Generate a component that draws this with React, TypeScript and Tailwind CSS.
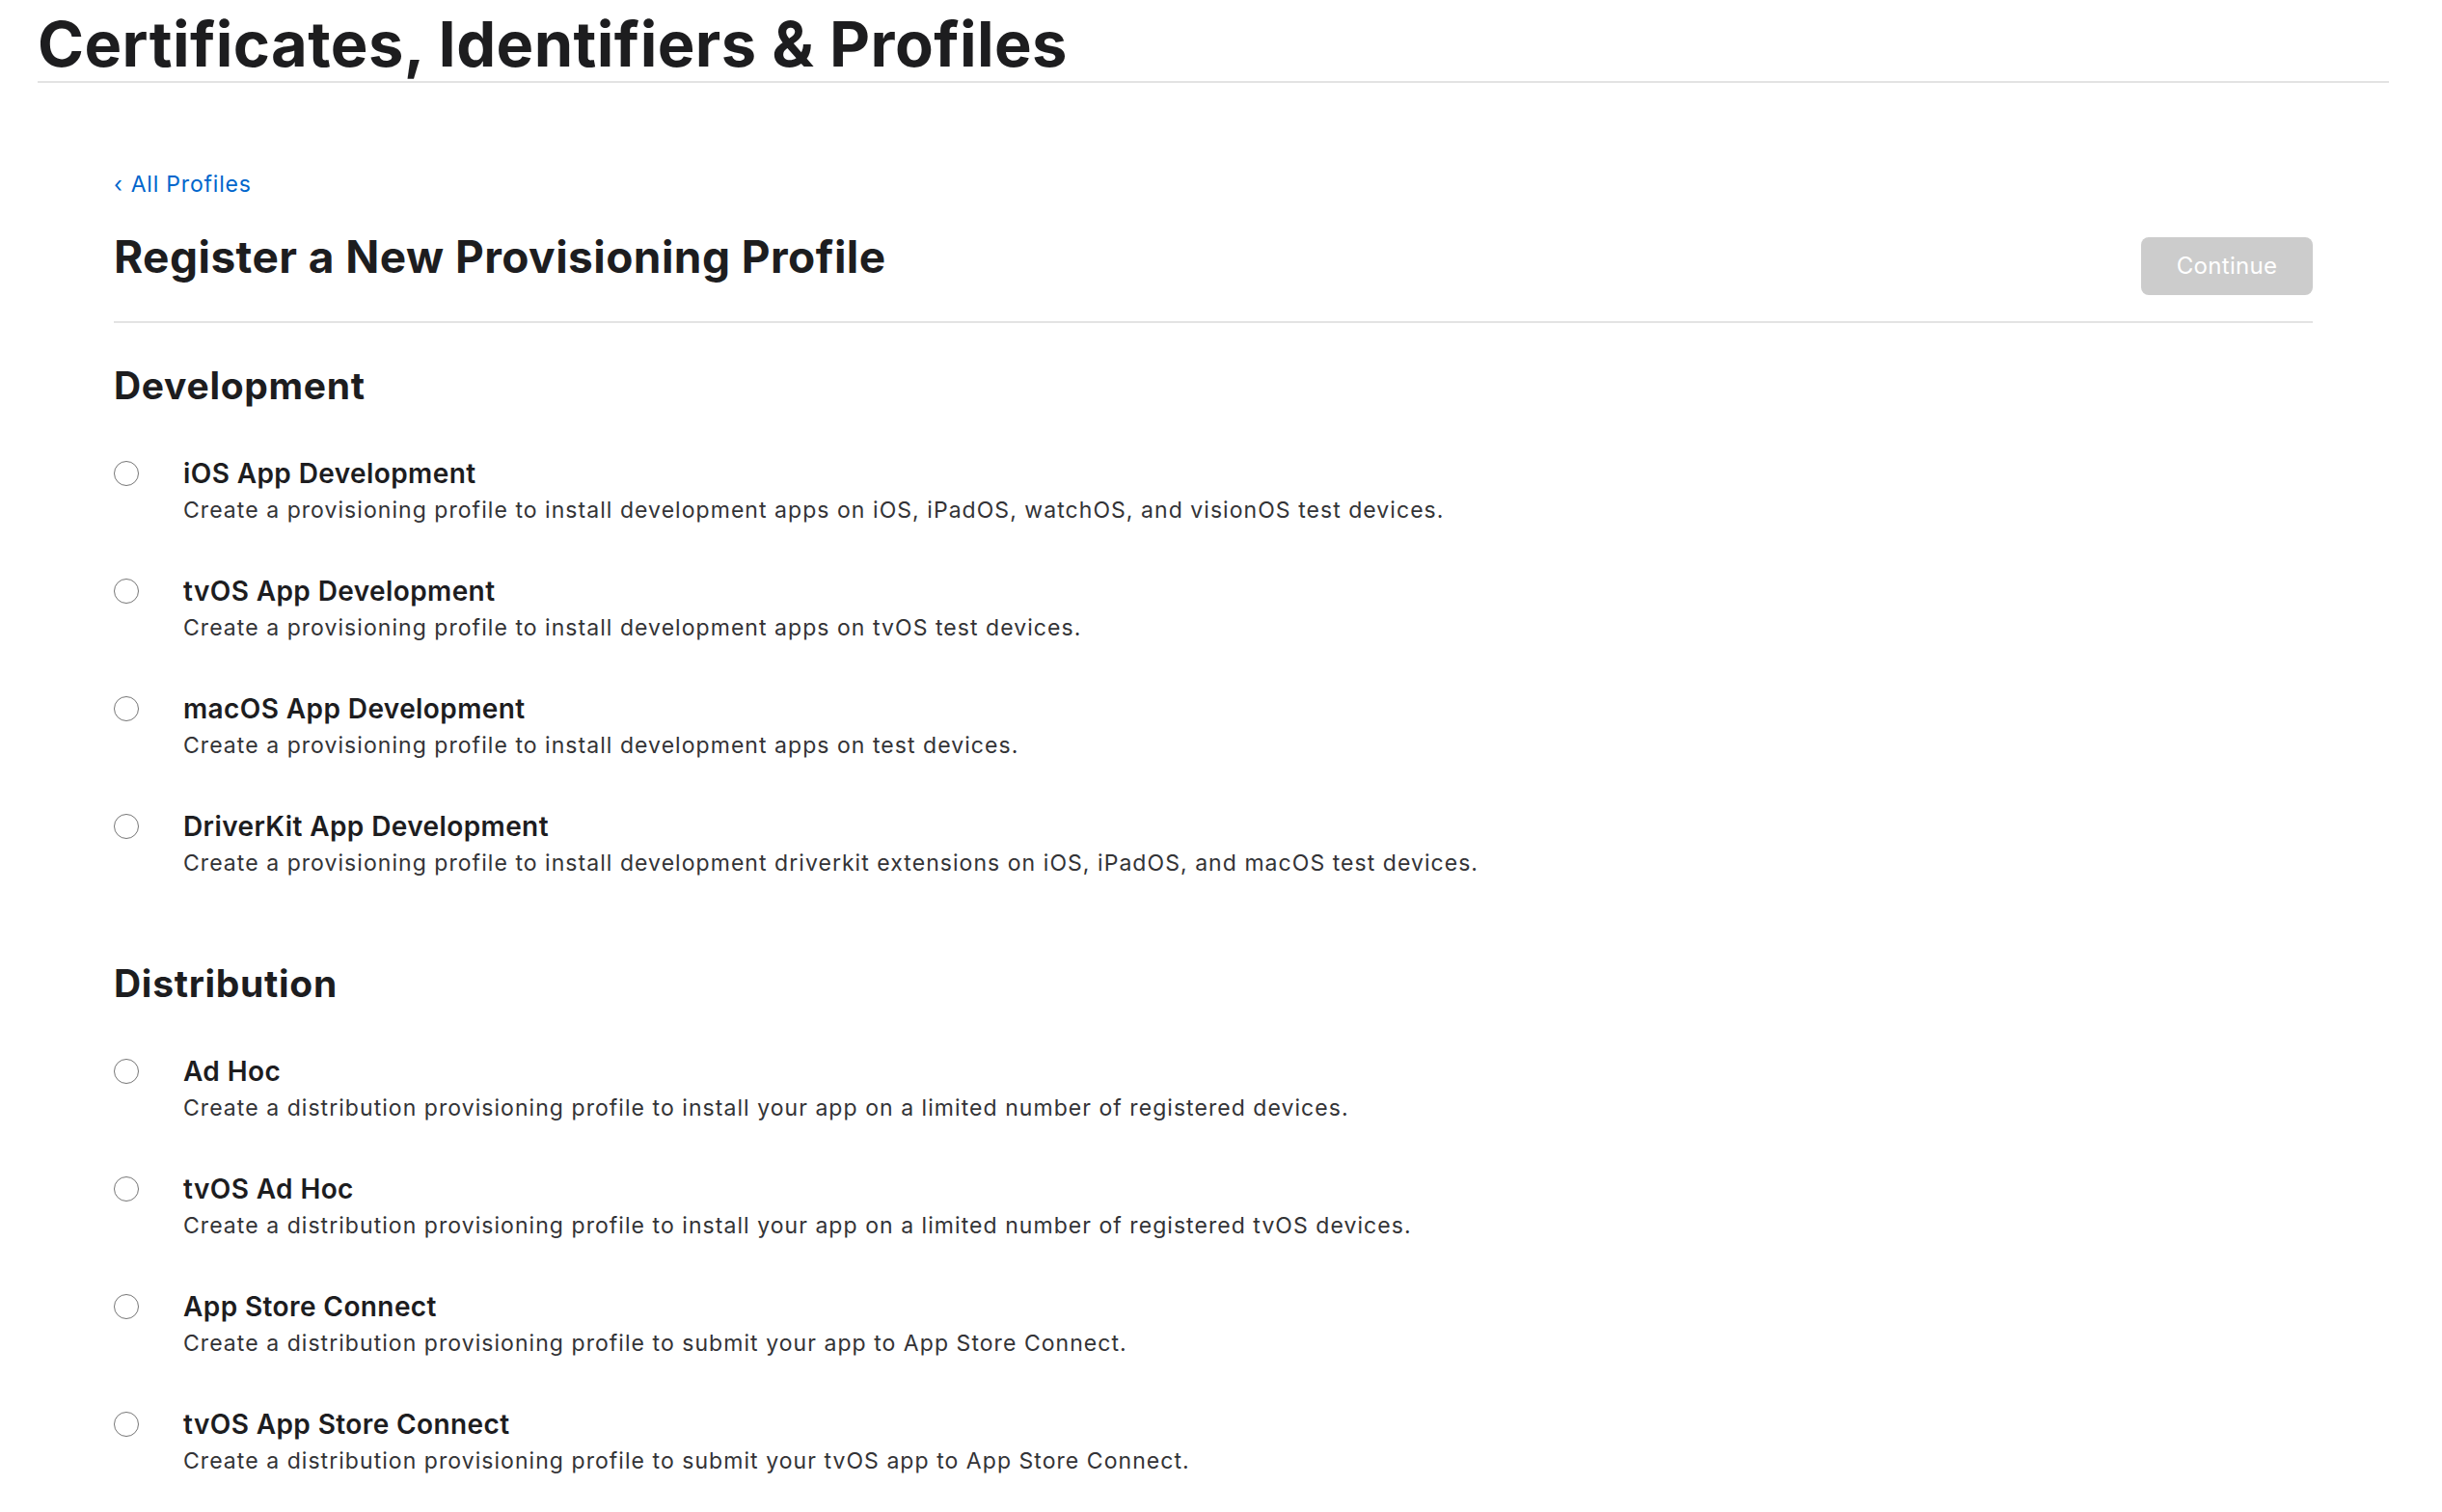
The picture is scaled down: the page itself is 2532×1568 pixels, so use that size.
import React from 'react';

interface ProfileOption {
  id: string;
  title: string;
  description: string;
}

const development: ProfileOption[] = [
  {
    id: 'ios-dev',
    title: 'iOS App Development',
    description:
      'Create a provisioning profile to install development apps on iOS, iPadOS, watchOS, and visionOS test devices.',
  },
  {
    id: 'tvos-dev',
    title: 'tvOS App Development',
    description: 'Create a provisioning profile to install development apps on tvOS test devices.',
  },
  {
    id: 'macos-dev',
    title: 'macOS App Development',
    description: 'Create a provisioning profile to install development apps on test devices.',
  },
  {
    id: 'driverkit-dev',
    title: 'DriverKit App Development',
    description:
      'Create a provisioning profile to install development driverkit extensions on iOS, iPadOS, and macOS test devices.',
  },
];

const distribution: ProfileOption[] = [
  {
    id: 'adhoc',
    title: 'Ad Hoc',
    description:
      'Create a distribution provisioning profile to install your app on a limited number of registered devices.',
  },
  {
    id: 'tvos-adhoc',
    title: 'tvOS Ad Hoc',
    description:
      'Create a distribution provisioning profile to install your app on a limited number of registered tvOS devices.',
  },
  {
    id: 'asc',
    title: 'App Store Connect',
    description: 'Create a distribution provisioning profile to submit your app to App Store Connect.',
  },
  {
    id: 'tvos-asc',
    title: 'tvOS App Store Connect',
    description: 'Create a distribution provisioning profile to submit your tvOS app to App Store Connect.',
  },
];

function OptionRow({ option }: { option: ProfileOption }) {
  return (
    <label className="flex items-start cursor-pointer">
      <span className="mt-[3px] w-[26px] h-[26px] shrink-0 rounded-full border-[1.5px] border-[#767676] bg-white" />
      <div className="ml-[46px]">
        <p className="text-[28px] leading-[32px] font-semibold text-[#1d1d1f] tracking-[0.4px]">
          {option.title}
        </p>
        <p className="mt-2 text-[23px] leading-[28px] text-[#333336] tracking-[1.05px]">{option.description}</p>
      </div>
    </label>
  );
}

function Section({ title, options, className }: { title: string; options: ProfileOption[]; className?: string }) {
  return (
    <section className={className}>
      <h2 className="text-[39px] leading-[46px] font-bold text-[#1d1d1f] tracking-[0.7px]">{title}</h2>
      <div className="mt-[52px] flex flex-col gap-[54px]">
        {options.map((o) => (
          <OptionRow key={o.id} option={o} />
        ))}
      </div>
    </section>
  );
}

export default function App() {
  return (
    <div className="min-h-screen bg-white pl-[39px] pr-[55px] font-['Inter','Liberation_Sans',sans-serif] antialiased">
      {/* ヘッダー */}
      <h1 className="pt-[8px] text-[65px] leading-[76px] font-bold text-[#1d1d1f] tracking-[0.4px] border-b-2 border-[#e3e3e3]">
        Certificates, Identifiers &amp; Profiles
      </h1>

      <div className="mx-[79px]">
        <a href="#" className="mt-[91px] flex items-center text-[23px] leading-[28px] text-[#0066cc] tracking-[0.8px]">
          <span className="mr-[8px]">‹</span>
          All Profiles
        </a>

        <div className="mt-[33px] flex items-start justify-between pb-[27px] border-b-2 border-[#e3e3e3]">
          <h2 className="text-[46px] leading-[56px] font-bold text-[#1d1d1f] tracking-[0.45px]">
            Register a New Provisioning Profile
          </h2>
          <button
            disabled
            className="mt-[8px] w-[178px] h-[60px] rounded-[8px] bg-[#cccccc] text-white text-[24px] tracking-[0.3px]"
          >
            Continue
          </button>
        </div>

        <Section title="Development" options={development} className="mt-[42px]" />
        <Section title="Distribution" options={distribution} className="mt-[88px]" />
      </div>
    </div>
  );
}
